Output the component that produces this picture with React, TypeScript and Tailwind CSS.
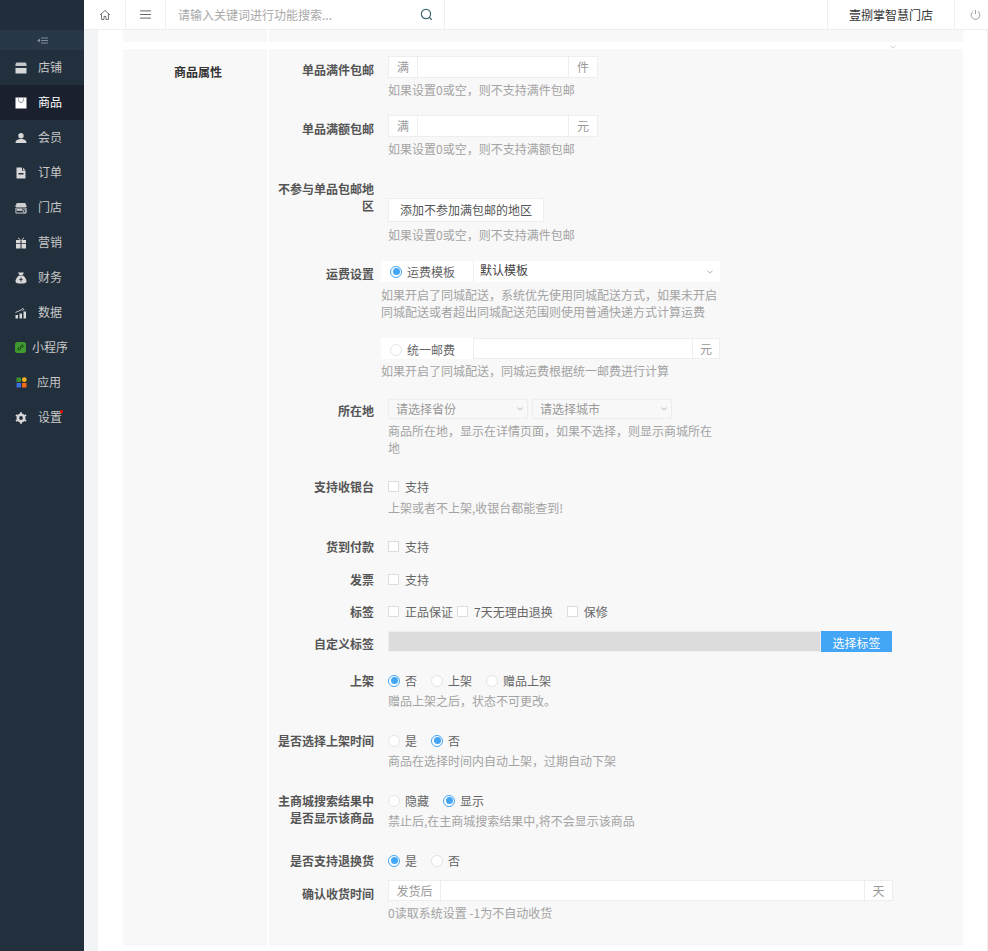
import React from "react";

const font = { fontFamily: '"Noto Sans CJK SC", "Noto Sans", sans-serif' };

function Help({ children, className = "" }: { children: React.ReactNode; className?: string }) {
  return <div className={"text-[12px] leading-[17px] text-[#a3a3a3] " + className}>{children}</div>;
}

function Row({ label, labelClass = "", className = "", children }: { label: React.ReactNode; labelClass?: string; className?: string; children: React.ReactNode }) {
  return (
    <div className={"flex " + className}>
      <div className={"w-[105px] shrink-0 text-right text-[12px] leading-[17px] font-bold text-[#555] " + labelClass}>{label}</div>
      <div className="ml-[14px] w-[505px] shrink-0">{children}</div>
    </div>
  );
}

function Addon({ children, className = "" }: { children: React.ReactNode; className?: string }) {
  return <div className={"flex items-center justify-center text-[12px] text-[#999] " + className}>{children}</div>;
}

function InputGroup({ pre, post, width, preW }: { pre: string; post: string; width: string; preW: string }) {
  return (
    <div className={"flex h-[22px] border border-[#eeeeee] bg-white " + width}>
      <Addon className={"border-r border-[#eeeeee] " + preW}>{pre}</Addon>
      <div className="flex-1" />
      <Addon className="w-[29px] border-l border-[#eeeeee]">{post}</Addon>
    </div>
  );
}

function Radio({ on }: { on?: boolean }) {
  return (
    <span className={"flex h-[12px] w-[12px] shrink-0 items-center justify-center rounded-full border bg-white " + (on ? "border-[#42a5f5]" : "border-[#e4e4e4]")}>
      {on && <span className="h-[7px] w-[7px] rounded-full bg-[#42a5f5]" />}
    </span>
  );
}

function Check() {
  return <span className="h-[11px] w-[11px] shrink-0 border border-[#dddddd] bg-white" />;
}

function Opt({ on, text, className = "" }: { on?: boolean; text: string; className?: string }) {
  return (
    <span className={"flex items-center gap-[5px] text-[12px] leading-[17px] text-[#666] " + className}>
      <Radio on={on} />
      {text}
    </span>
  );
}

function Chk({ text, className = "" }: { text: string; className?: string }) {
  return (
    <span className={"flex items-center gap-[6px] text-[12px] leading-[17px] text-[#666] " + className}>
      <Check />
      {text}
    </span>
  );
}

function Chevron({ className = "" }: { className?: string }) {
  return (
    <svg viewBox="0 0 8 5" className={"h-[4px] w-[6px] " + className} fill="none" stroke="#999" strokeWidth="1">
      <path d="M0.5 0.5 4 4 7.5 0.5" />
    </svg>
  );
}

const Store = () => (
  <svg viewBox="0 0 12 12" className="h-[12px] w-[12px]" fill="#d8d8d8">
    <path d="M1.500 .5h9l1 1.500v2H.5V2z" fill="#c4c7ca" />
    <path d="M.5 5.500c1 .8 2 .8 2.750 0 .8.8 1.900.8 2.750 0 .8.8 1.900.8 2.750 0 .8.8 1.750.8 2.750 0v6h-11z" />
    <path d="M.5 4h11v1.500h-11z" fill="#222f3c" />
  </svg>
);
const Bag = () => (
  <svg viewBox="0 0 12 12" className="h-[12px] w-[12px]">
    <path d="M.5 .5h11v11h-11z" fill="#fff" />
    <path d="M3.500 1.500c0 3 1 4 2.500 4s2.500-1 2.500-4" fill="none" stroke="#8a919b" strokeWidth="1" />
  </svg>
);
const User = () => (
  <svg viewBox="0 0 12 12" className="h-[12px] w-[12px]" fill="#d8d8d8">
    <circle cx="6" cy="3.700" r="2.700" />
    <path d="M.5 11c0-3 2.500-4 5.500-4s5.500 1 5.500 4z" />
  </svg>
);
const FileIc = () => (
  <svg viewBox="0 0 12 12" className="h-[12px] w-[12px]" fill="#d8d8d8">
    <path d="M1.500 .5h5.500v3h3.500v8h-9z" />
    <path d="M8 .8l2.300 2.200H8z" />
    <path d="M3.500 6h5v1.500h-5z" fill="#222f3c" />
  </svg>
);
const Shop2 = () => (
  <svg viewBox="0 0 13 12" className="h-[12px] w-[13px]" fill="#d0d0d0">
    <path d="M2 .5h9l1.500 3v1.500H.5V3.500z" />
    <path d="M1 6h11v5.500H1z" fill="none" stroke="#d0d0d0" />
    <path d="M2 7h6v2H2z" />
    <circle cx="10.300" cy="9.500" r="1.500" fill="#222f3c" stroke="#d8d8d8" />
  </svg>
);
const Gift = () => (
  <svg viewBox="0 0 12 12" className="h-[12px] w-[12px]" fill="#d8d8d8">
    <path d="M1 3h4.500v3H1zM6.500 3H11v3H6.500zM1 6.800h4.500v4.700H1zM6.500 6.800H11v4.700H6.500z" />
    <path d="M3 .8 5.500 3M9 .8 6.500 3" stroke="#d8d8d8" fill="none" />
  </svg>
);
const Money = () => (
  <svg viewBox="0 0 12 12" className="h-[12px] w-[12px]" fill="#d8d8d8">
    <path d="M3 .5h6l-1.500 2.500h-3z" />
    <path d="M4 3.500h4c2 1.500 3.500 4 3.500 5.500 0 2-1.500 2.500-5.500 2.500S.5 11 .5 9C.5 7.500 2 5 4 3.500z" />
    <path d="M6 5.500v4M4.500 7.500h3" stroke="#222f3c" fill="none" />
  </svg>
);
const Chart = () => (
  <svg viewBox="0 0 12 12" className="h-[12px] w-[12px]" fill="#d8d8d8">
    <path d="M.5 8h2.500v3.500H.5zM4.500 6.500H7v5H4.500zM8.500 4.500H11v7H8.500z" />
    <path d="M.5 5.500 7 2.500M7 1.500l2 .8-1.500 1.500" stroke="#d8d8d8" fill="none" strokeWidth=".9" />
  </svg>
);
const Mini = () => (
  <svg viewBox="0 0 11 11" className="h-[11px] w-[11px]">
    <rect width="11" height="11" rx="2.500" fill="#3f9b2f" />
    <path d="M2.800 6.800c0 1.700 2.200 1.700 2.600.2l.4-2.800c.4-1.700 2.500-1.500 2.500 0 0 1-.8 1.400-1.500 1.400M4.300 5.400c-.8 0-1.500.5-1.500 1.400" fill="none" stroke="#14321a" strokeWidth=".9" />
  </svg>
);
const Apps = () => (
  <svg viewBox="0 0 11 11" className="h-[11px] w-[11px]">
    <rect x=".5" y=".5" width="4.500" height="4.500" fill="#3f9134" />
    <circle cx="8.300" cy="2.700" r="2.400" fill="#f5b21b" />
    <rect x=".5" y="6" width="4.500" height="4.500" fill="#3f6fdc" />
    <rect x="6" y="6" width="4.500" height="4.500" fill="#f56a12" />
  </svg>
);
const Gear = () => (
  <svg viewBox="0 0 12 12" className="h-[12px] w-[12px]" fill="none" stroke="#d8d8d8">
    <circle cx="6" cy="6" r="3.200" strokeWidth="2.600" />
    <path d="M6 .2v2M6 9.800v2M.9 3l1.700 1M9.400 8l1.700 1M.9 9l1.700-1M9.400 4l1.700-1" strokeWidth="1.800" />
  </svg>
);

function NavItem({ icon, text, active, iconClass = "pl-[15px]", gap = "ml-[11px]", dot }: { icon: React.ReactNode; text: string; active?: boolean; iconClass?: string; gap?: string; dot?: boolean }) {
  return (
    <div className={"flex h-[35px] items-center text-[12px] " + iconClass + " " + (active ? "bg-[#1a202d] text-white" : "text-[#c8c8c8]")}>
      <span className="flex w-[12px] justify-center">{icon}</span>
      <span className={"relative -translate-y-[1px] " + gap}>
        {text}
        {dot && <span className="absolute -right-[1px] top-[2px] h-[3px] w-[3px] rounded-full bg-[#ff0000]" />}
      </span>
    </div>
  );
}

export default function App() {
  return (
    <div className="flex h-[951px] w-[988px] overflow-hidden bg-[#f3f4f6]" style={font}>
      <aside className="w-[84px] shrink-0 bg-[#222f3c]">
        <div className="h-[30px] bg-[#212d3a]" />
        <div className="flex h-[20px] items-center justify-center bg-[#283848]">
          <svg viewBox="0 0 11 7" className="h-[7px] w-[11px]" fill="#7f8b97">
            <path d="M0 3.500 3 1.500v4zM4 .5h7v1H4zM4 3h7v1H4zM4 5.500h7v1H4z" />
          </svg>
        </div>
        <NavItem icon={<Store />} text="店铺" />
        <NavItem icon={<Bag />} text="商品" active />
        <NavItem icon={<User />} text="会员" />
        <NavItem icon={<FileIc />} text="订单" />
        <NavItem icon={<Shop2 />} text="门店" />
        <NavItem icon={<Gift />} text="营销" />
        <NavItem icon={<Money />} text="财务" />
        <NavItem icon={<Chart />} text="数据" />
        <NavItem icon={<Mini />} text="小程序" iconClass="pl-[14px]" gap="ml-[6px]" />
        <NavItem icon={<Apps />} text="应用" iconClass="pl-[15px]" gap="ml-[10px]" />
        <NavItem icon={<Gear />} text="设置" dot />
      </aside>

      <div className="flex min-w-0 flex-1 flex-col">
        <header className="flex h-[30px] shrink-0 border-b border-[#eeeeee] bg-white">
          <div className="flex w-[42px] items-center justify-center border-r border-[#eeeeee]">
            <svg viewBox="0 0 24 24" className="h-[12px] w-[12px]" fill="none" stroke="#777" strokeWidth="2">
              <path d="M2 12 12 3l10 9" />
              <path d="M5 10v11h5v-6h4v6h5V10" />
            </svg>
          </div>
          <div className="flex w-[40px] items-center justify-center border-r border-[#eeeeee]">
            <svg viewBox="0 0 12 10" className="h-[9px] w-[11px]" fill="none" stroke="#555" strokeWidth="1">
              <path d="M0 1h12M0 5h12M0 9h12" />
            </svg>
          </div>
          <div className="flex w-[279px] items-center justify-between border-r border-[#eeeeee] pl-[12px] pr-[11px] text-[12px] text-[#a8a8a8]">
            <span>请输入关键词进行功能搜索...</span>
            <svg viewBox="0 0 24 24" className="h-[13px] w-[13px]" fill="none" stroke="#3d6470" strokeWidth="2.200">
              <circle cx="11" cy="11" r="8.500" />
              <path d="m17 17 5 5" />
            </svg>
          </div>
          <div className="flex-1" />
          <div className="flex w-[128px] items-center justify-center border-l border-r border-[#eeeeee] text-[12px] text-[#333]">壹捌掌智慧门店</div>
          <div className="flex w-[33px] items-center justify-center pl-[8px]">
            <svg viewBox="0 0 24 24" className="h-[11px] w-[11px]" fill="none" stroke="#888" strokeWidth="1.800">
              <path d="M7 5a9.500 9.500 0 1 0 10 0" />
              <path d="M12 2v9" />
            </svg>
          </div>
        </header>

        <main className="ml-[14px] flex-1 border-r border-[#eeeeee] bg-white pl-[25px] pr-[24px]">
          <div className="flex h-[12px]">
            <div className="w-[144px] bg-[#f8f8f8]" />
            <div className="ml-[2px] flex-1 bg-[#f8f8f8]" />
          </div>
          <div className="relative mt-[7px] flex h-[897px]">
            <Chevron className="absolute left-[767px] -top-[4px] opacity-60" />
            <div className="w-[144px] bg-[#f8f8f8] pr-[45px] pt-[14px] text-right text-[12px] leading-[17px] font-bold text-[#333]">商品属性</div>
            <div className="ml-[2px] flex-1 bg-[#f8f8f8] pt-[7px]">
              <Row label="单品满件包邮" labelClass="pt-[5px]">
                <InputGroup pre="满" post="件" width="w-[210px]" preW="w-[29px]" />
                <Help className="mt-[3px]">如果设置0或空，则不支持满件包邮</Help>
              </Row>
              <Row label="单品满额包邮" labelClass="pt-[5px]" className="mt-[17px]">
                <InputGroup pre="满" post="元" width="w-[210px]" preW="w-[29px]" />
                <Help className="mt-[3px]">如果设置0或空，则不支持满额包邮</Help>
              </Row>
              <Row label={<>不参与单品包邮地<br />区</>} className="mt-[23px]">
                <div className="mt-[18px] flex h-[24px] w-[156px] items-center justify-center border border-[#eeeeee] bg-white text-[12px] text-[#555]">添加不参加满包邮的地区</div>
                <Help className="mt-[4px]">如果设置0或空，则不支持满件包邮</Help>
              </Row>
              <Row label="运费设置" labelClass="pt-[4px]" className="mt-[18px]">
                <div className="-ml-[7px] w-[339px]">
                  <div className="flex h-[21px]">
                    <div className="w-[92px] bg-white pl-[9px] pt-[2px]"><Opt on text="运费模板" /></div>
                    <div className="flex w-[247px] items-center justify-between border-l border-[#eeeeee] bg-white pl-[6px] pr-[7px] pb-[3px] text-[12px] text-[#444]">
                      默认模板
                      <Chevron className="mt-[4px]" />
                    </div>
                  </div>
                  <Help className="mt-[4px]">如果开启了同城配送，系统优先使用同城配送方式，如果未开启<br />同城配送或者超出同城配送范围则使用普通快递方式计算运费</Help>
                </div>
              </Row>
              <Row label="" className="mt-[18px]">
                <div className="-ml-[7px] w-[339px]">
                  <div className="flex h-[21px]">
                    <div className="w-[92px] bg-white pl-[9px] pt-[3px]"><Opt text="统一邮费" /></div>
                    <div className="flex flex-1 border border-[#eeeeee] bg-white">
                      <div className="flex-1" />
                      <Addon className="w-[27px] border-l border-[#eeeeee]">元</Addon>
                    </div>
                  </div>
                  <Help className="mt-[3px]">如果开启了同城配送，同城运费根据统一邮费进行计算</Help>
                </div>
              </Row>
              <Row label="所在地" labelClass="pt-[3px]" className="mt-[20px]">
                <div className="flex h-[20px] gap-[4px] text-[12px] text-[#999]">
                  <div className="flex w-[140px] items-center justify-between border border-[#eeeeee] pl-[7px] pr-[4px]">请选择省份<Chevron /></div>
                  <div className="flex w-[140px] items-center justify-between border border-[#eeeeee] pl-[7px] pr-[4px]">请选择城市<Chevron /></div>
                </div>
                <Help className="mt-[3px] w-[330px]">商品所在地，显示在详情页面，如果不选择，则显示商城所在地</Help>
              </Row>
              <Row label="支持收银台" className="mt-[22px]">
                <Chk text="支持" />
                <Help className="mt-[4px]">上架或者不上架,收银台都能查到!</Help>
              </Row>
              <Row label="货到付款" className="mt-[22px]"><Chk text="支持" /></Row>
              <Row label="发票" className="mt-[16px]"><Chk text="支持" /></Row>
              <Row label="标签" className="mt-[15px]">
                <div className="flex">
                  <Chk text="正品保证" />
                  <Chk text="7天无理由退换" className="ml-[4px]" />
                  <Chk text="保修" className="ml-[14px]" />
                </div>
              </Row>
              <Row label="自定义标签" labelClass="pt-[4px]" className="mt-[11px]">
                <div className="flex h-[21px]">
                  <div className="w-[433px] border border-[#eeeeee] bg-[#dcdcdc]" />
                  <div className="flex w-[71px] items-center justify-center bg-[#42a5f5] pt-[3px] text-[12px] text-white">选择标签</div>
                </div>
              </Row>
              <Row label="上架" className="mt-[20px]">
                <div className="flex">
                  <Opt on text="否" />
                  <Opt text="上架" className="ml-[14px]" />
                  <Opt text="赠品上架" className="ml-[14px]" />
                </div>
                <Help className="mt-[3px]">赠品上架之后，状态不可更改。</Help>
              </Row>
              <Row label="是否选择上架时间" className="mt-[23px]">
                <div className="flex">
                  <Opt text="是" />
                  <Opt on text="否" className="ml-[14px]" />
                </div>
                <Help className="mt-[3px]">商品在选择时间内自动上架，过期自动下架</Help>
              </Row>
              <Row label={<>主商城搜索结果中<br />是否显示该商品</>} className="mt-[23px]">
                <div className="flex">
                  <Opt text="隐藏" />
                  <Opt on text="显示" className="ml-[14px]" />
                </div>
                <Help className="mt-[3px]">禁止后,在主商城搜索结果中,将不会显示该商品</Help>
              </Row>
              <Row label="是否支持退换货" className="mt-[23px]">
                <div className="flex">
                  <Opt on text="是" />
                  <Opt text="否" className="ml-[14px]" />
                </div>
              </Row>
              <Row label="确认收货时间" labelClass="pt-[5px]" className="mt-[11px]">
                <div className="flex h-[21px] border border-[#eeeeee] bg-white">
                  <Addon className="w-[52px] border-r border-[#eeeeee]">发货后</Addon>
                  <div className="flex-1" />
                  <Addon className="w-[28px] border-l border-[#eeeeee]">天</Addon>
                </div>
                <Help className="mt-[3px]">0读取系统设置 -1为不自动收货</Help>
              </Row>
            </div>
          </div>
        </main>
      </div>
    </div>
  );
}
